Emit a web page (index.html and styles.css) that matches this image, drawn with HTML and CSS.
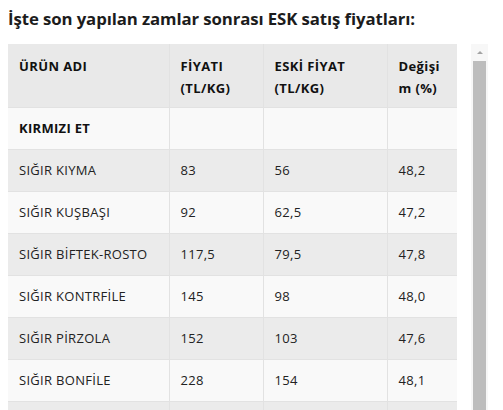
FILE: index.html
```html
<!DOCTYPE html>
<html lang="tr">
<head>
    <meta charset="UTF-8">
    <meta name="viewport" content="width=device-width, initial-scale=1.0">
    <title>Et Fiyatları</title>
    <link rel="stylesheet" href="styles.css">
</head>
<body>
    <h2 class="page-title">İşte son yapılan zamlar sonrası ESK satış fiyatları:</h2>

    <div class="table-area">
        <div class="table-wrap">
            <table class="price-table">
                <thead>
                    <tr>
                        <th class="col-name">ÜRÜN ADI</th>
                        <th class="col-price">FİYATI (TL/KG)</th>
                        <th class="col-old">ESKİ FİYAT (TL/KG)</th>
                        <th class="col-change">Değişi<br>m (%)</th>
                    </tr>
                </thead>
                <tbody>
                    <tr class="group-row">
                        <td>KIRMIZI ET</td>
                        <td></td>
                        <td></td>
                        <td></td>
                    </tr>
                    <tr>
                        <td>SIĞIR KIYMA</td>
                        <td>83</td>
                        <td>56</td>
                        <td>48,2</td>
                    </tr>
                    <tr>
                        <td>SIĞIR KUŞBAŞI</td>
                        <td>92</td>
                        <td>62,5</td>
                        <td>47,2</td>
                    </tr>
                    <tr>
                        <td>SIĞIR BİFTEK-ROSTO</td>
                        <td>117,5</td>
                        <td>79,5</td>
                        <td>47,8</td>
                    </tr>
                    <tr>
                        <td>SIĞIR KONTRFİLE</td>
                        <td>145</td>
                        <td>98</td>
                        <td>48,0</td>
                    </tr>
                    <tr>
                        <td>SIĞIR PİRZOLA</td>
                        <td>152</td>
                        <td>103</td>
                        <td>47,6</td>
                    </tr>
                    <tr>
                        <td>SIĞIR BONFİLE</td>
                        <td>228</td>
                        <td>154</td>
                        <td>48,1</td>
                    </tr>
                    <!-- next row, only its top edge is in view -->
                    <tr>
                        <td></td>
                        <td></td>
                        <td></td>
                        <td></td>
                    </tr>
                </tbody>
            </table>
        </div>

        <!-- scrollbar of the embedded frame -->
        <div class="fake-scrollbar">
            <div class="scroll-arrow"></div>
            <div class="scroll-thumb"></div>
        </div>
    </div>
</body>
</html>
```

FILE: styles.css
```css
* {
    margin: 0;
    padding: 0;
    box-sizing: border-box;
}

body {
    background: #fff;
    font-family: 'Open Sans', 'DejaVu Sans', sans-serif;
    color: #222;
    height: 410px;
    overflow: hidden;
}

.page-title {
    font-size: 16.8px;
    font-weight: 700;
    color: #1c1c1c;
    padding: 7px 0 0 8px;
    height: 44px;
    letter-spacing: -0.1px;
}

.table-area {
    display: flex;
    padding-left: 8px;
    gap: 14px;
}

.table-wrap {
    width: 449px;
}

.price-table {
    width: 100%;
    border-collapse: collapse;
    table-layout: fixed;
    font-size: 13px;
    letter-spacing: 0.3px;
}

.col-name { width: 161px; }
.col-price { width: 94px; }
.col-old { width: 124px; }
.col-change { width: 70px; }

.price-table th,
.price-table td {
    text-align: left;
    padding: 0 11px;
    border-right: 1px solid #e2e2e2;
    border-bottom: 1px solid #e2e2e2;
    height: 42px;
}

.price-table th:last-child,
.price-table td:last-child {
    border-right: none;
}

.price-table thead tr {
    background: #e9e9e9;
}

.price-table th {
    height: 63px;
    vertical-align: top;
    padding-top: 11px;
    line-height: 22px;
    font-weight: 700;
    color: #111;
    letter-spacing: 0.4px;
}

.price-table tbody tr:nth-child(odd) {
    background: #f9f9f9;
}

.price-table tbody tr:nth-child(even) {
    background: #ebebeb;
}

.group-row td {
    font-weight: 700;
    color: #111;
}

.fake-scrollbar {
    width: 17px;
    height: 380px;
    background: #f7f7f7;
    display: flex;
    flex-direction: column;
    align-items: center;
}

.scroll-arrow {
    height: 17px;
    width: 100%;
    display: flex;
    justify-content: center;
    padding-top: 7px;
}

.scroll-arrow::before {
    content: "";
    border-left: 3px solid transparent;
    border-right: 3px solid transparent;
    border-bottom: 3px solid #a3a3a3;
    height: 0;
}

.scroll-thumb {
    width: 13px;
    flex: 1;
    background: #bdbdbd;
}
```
